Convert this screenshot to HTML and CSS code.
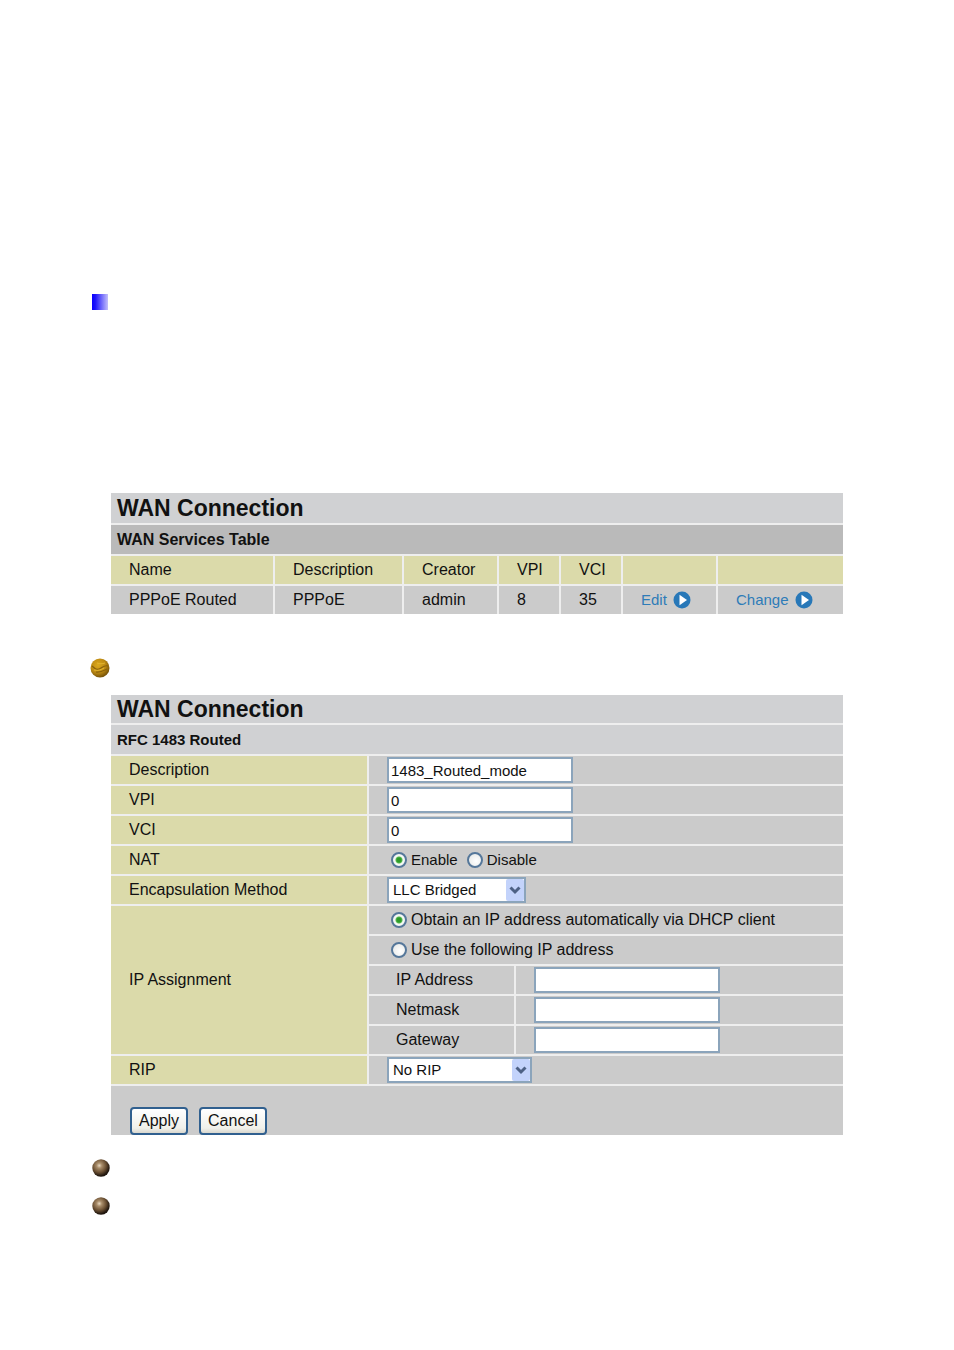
FILE: index.html
```html
<!DOCTYPE html>
<html lang="en">
<head>
<meta charset="utf-8">
<title>WAN Connection</title>
<link rel="stylesheet" href="styles.css">
</head>
<body>
<main class="page">
  <svg class="marker marker-square" viewBox="0 0 16 16" aria-hidden="true">
    <defs><linearGradient id="blue"><stop offset="0" stop-color="#0a00ff"/><stop offset=".2" stop-color="#1c12fb"/><stop offset="1" stop-color="#c3c0fb"/></linearGradient></defs>
    <rect width="16" height="16" fill="url(#blue)"/>
  </svg>

  <section class="panel">
    <table class="grid services">
      <colgroup><col class="c-name"><col class="c-desc"><col class="c-creator"><col class="c-num"><col class="c-num"><col class="c-edit"><col></colgroup>
      <thead>
        <tr><th class="title" colspan="7">WAN Connection</th></tr>
        <tr><th class="subtitle dark" colspan="7">WAN Services Table</th></tr>
        <tr class="head"><th>Name</th><th>Description</th><th>Creator</th><th>VPI</th><th>VCI</th><th></th><th></th></tr>
      </thead>
      <tbody>
        <tr>
          <td>PPPoE Routed</td><td>PPPoE</td><td>admin</td><td>8</td><td>35</td>
          <td><a class="action" href="#edit">Edit <svg viewBox="0 0 18 18" aria-hidden="true"><circle cx="9" cy="9" r="8.5" fill="#2878b8"/><path d="M6.500 3.800v10.400L14 9z" fill="#fff"/></svg></a></td>
          <td><a class="action" href="#change">Change <svg viewBox="0 0 18 18" aria-hidden="true"><circle cx="9" cy="9" r="8.5" fill="#2878b8"/><path d="M6.500 3.800v10.400L14 9z" fill="#fff"/></svg></a></td>
        </tr>
      </tbody>
    </table>
  </section>

  <svg class="marker marker-gold" viewBox="0 0 20 20" aria-hidden="true">
    <defs><radialGradient id="gold" cx=".4" cy=".35" r=".65"><stop offset="0" stop-color="#dca91c"/><stop offset=".6" stop-color="#bd8a13"/><stop offset="1" stop-color="#785409"/></radialGradient></defs>
    <circle cx="10" cy="10" r="9.5" fill="url(#gold)"/>
    <path d="M2 8c4 4 6 4 9 2s4-3 7-2M6 14c4 1 7-1 11-3" fill="none" stroke="#8a620c" stroke-width="1.2"/>
    <path d="M7 5c3 1 5 1 8 0M4 12c4 1 7 0 10-2" fill="none" stroke="#e2b430" stroke-width="1"/>
  </svg>

  <form class="panel" action="#">
    <table class="grid routed">
      <colgroup><col class="c-label"><col class="c-inner"><col></colgroup>
      <tbody>
        <tr><th class="title" colspan="3">WAN Connection</th></tr>
        <tr><th class="subtitle" colspan="3">RFC 1483 Routed</th></tr>
        <tr><th class="label"><label for="desc">Description</label></th><td colspan="2"><input class="text" id="desc" type="text" value="1483_Routed_mode"></td></tr>
        <tr><th class="label"><label for="vpi">VPI</label></th><td colspan="2"><input class="text" id="vpi" type="text" value="0"></td></tr>
        <tr><th class="label"><label for="vci">VCI</label></th><td colspan="2"><input class="text" id="vci" type="text" value="0"></td></tr>
        <tr><th class="label">NAT</th><td colspan="2"><div class="choices compact"><label class="choice"><input type="radio" name="nat" checked>Enable</label><label class="choice"><input type="radio" name="nat">Disable</label></div></td></tr>
        <tr><th class="label"><label for="encap">Encapsulation Method</label></th><td colspan="2"><span class="drop drop-encap"><select id="encap"><option>LLC Bridged</option></select><svg viewBox="0 0 18 22" aria-hidden="true"><rect width="18" height="22" rx="2" fill="#c3d3fb"/><path d="M4.500 8.500L9 13l4.500-4.500" fill="none" stroke="#4d6185" stroke-width="3"/></svg></span></td></tr>
        <tr><th class="label" rowspan="5">IP Assignment</th><td colspan="2"><div class="choices"><label class="choice"><input type="radio" name="ip" checked>Obtain an IP address automatically via DHCP client</label></div></td></tr>
        <tr><td colspan="2"><div class="choices"><label class="choice"><input type="radio" name="ip">Use the following IP address</label></div></td></tr>
        <tr><td class="inner"><label for="addr">IP Address</label></td><td><input class="text" id="addr" type="text"></td></tr>
        <tr><td class="inner"><label for="mask">Netmask</label></td><td><input class="text" id="mask" type="text"></td></tr>
        <tr><td class="inner"><label for="gate">Gateway</label></td><td><input class="text" id="gate" type="text"></td></tr>
        <tr><th class="label"><label for="rip">RIP</label></th><td colspan="2"><span class="drop drop-rip"><select id="rip"><option>No RIP</option></select><svg viewBox="0 0 18 22" aria-hidden="true"><rect width="18" height="22" rx="2" fill="#c3d3fb"/><path d="M4.500 8.500L9 13l4.500-4.500" fill="none" stroke="#4d6185" stroke-width="3"/></svg></span></td></tr>
      </tbody>
    </table>
    <div class="buttons"><button type="submit">Apply</button><button type="reset">Cancel</button></div>
  </form>

  <svg class="marker marker-ball" viewBox="0 0 18 18" aria-hidden="true">
    <defs><radialGradient id="ball" cx=".4" cy=".36" r=".6"><stop offset="0" stop-color="#e8d8c0"/><stop offset=".25" stop-color="#a98d6a"/><stop offset=".65" stop-color="#6b5033"/><stop offset="1" stop-color="#20160e"/></radialGradient></defs>
    <circle cx="9" cy="9" r="8.700" fill="url(#ball)"/>
  </svg>
  <svg class="marker marker-ball" viewBox="0 0 18 18" aria-hidden="true"><circle cx="9" cy="9" r="8.700" fill="url(#ball)"/></svg>
</main>
</body>
</html>
```

FILE: styles.css
```css
* { box-sizing: border-box; }

body {
  margin: 0;
  background: #fff;
  color: #111;
  font: 16px/20px "Liberation Sans", Arial, sans-serif;
}

.page {
  display: flex;
  flex-direction: column;
  padding: 294px 111px 132px 90px;
}

.marker { display: block; flex: none; }
.marker-square { width: 16px; height: 16px; margin: 0 0 183px 2px; }
.marker-gold { width: 20px; height: 20px; margin: 44px 0 17px; }
.marker-ball { width: 18px; height: 18px; margin: 24px 0 -4px 2px; }

.panel { margin-left: 21px; background: #cbcbcb; }

.grid {
  width: 100%;
  table-layout: fixed;
  border-collapse: separate;
  border-spacing: 0;
}
.grid th,
.grid td {
  height: 30px;
  padding: 0 0 0 18px;
  border-bottom: 2px solid #eee;
  background: #cbcbcb;
  text-align: left;
  vertical-align: middle;
  font-weight: normal;
}
.grid th + th,
.grid td + td,
.grid .label + td { border-left: 2px solid #eee; }
.routed td { border-left: 2px solid #eee; }

.grid .title,
.grid .subtitle {
  padding-left: 6px;
  background: #d0d1d3;
  font-weight: bold;
}
.grid .title { font-size: 23px; line-height: 26px; }
.grid .subtitle { height: 31px; font-size: 15px; }
.grid .dark { background: #bababa; font-size: 16px; }
.grid .head th,
.grid .label { background: #dbdaaa; }
.services .title { height: 32px; }
.services tbody td { height: 28px; border-bottom: 0; }

.c-name { width: 162px; }
.c-desc { width: 129px; }
.c-creator { width: 95px; }
.c-num { width: 62px; }
.c-edit { width: 95px; }
.c-label { width: 256px; }
.c-inner { width: 147px; }

.action {
  display: flex;
  align-items: center;
  gap: 6px;
  color: #2e7cb8;
  font-size: 15px;
  text-decoration: none;
}
.action svg { width: 18px; height: 18px; }

.grid .inner { padding-left: 27px; }

.text {
  display: block;
  width: 186px;
  height: 26px;
  padding: 0 2px;
  border: 2px solid #8ba4bb;
  background: #fff;
  color: #111;
  font: inherit;
  font-size: 15px;
}

.choices { display: flex; gap: 9px; padding-left: 4px; }
.compact { font-size: 15px; }
.choice { display: flex; align-items: center; gap: 4px; }
.choice input {
  appearance: none;
  width: 16px;
  height: 16px;
  margin: 0;
  border: 2px solid #55779a;
  border-radius: 50%;
  background: radial-gradient(circle at 60% 60%, #fff, #e4e6e4);
}
.choice input:checked { background: radial-gradient(circle, #2d9a29 0 2px, #55b94d 3px, #f4f8f4 4px); }

.drop { display: block; position: relative; }
.drop-encap { width: 139px; }
.drop-rip { width: 145px; }
.drop select {
  appearance: none;
  display: block;
  width: 100%;
  height: 26px;
  padding: 0 22px 0 4px;
  border: 2px solid #8ba4bb;
  border-radius: 0;
  background: #fff;
  color: #111;
  font: inherit;
  font-size: 15px;
}
.drop svg {
  position: absolute;
  top: 2px;
  right: 2px;
  width: 18px;
  height: 22px;
  pointer-events: none;
}

.buttons { display: flex; gap: 11px; padding: 21px 0 0 19px; }
.buttons button {
  height: 28px;
  padding: 0 7px;
  border: 2px solid #31608f;
  border-radius: 4px;
  background: linear-gradient(#fff, #f0f0ea 80%, #d9d7ce);
  color: #111;
  font: inherit;
}
```
